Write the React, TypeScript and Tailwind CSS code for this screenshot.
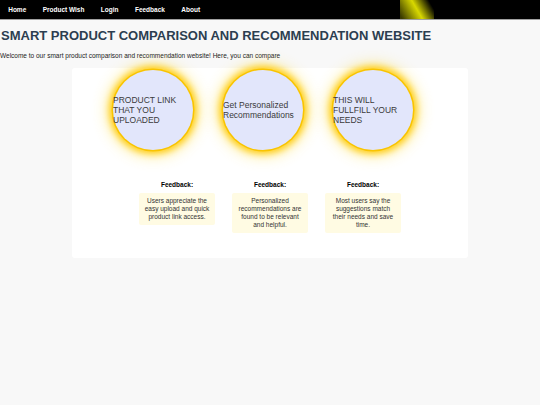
import React from 'react';

const navItems = ['Home', 'Product Wish', 'Login', 'Feedback', 'About'];

const circles = [
  'PRODUCT LINK THAT YOU UPLOADED',
  'Get Personalized Recommendations',
  'THIS WILL FULLFILL YOUR NEEDS',
];

const feedback = [
  'Users appreciate the easy upload and quick product link access.',
  'Personalized recommendations are found to be relevant and helpful.',
  'Most users say the suggestions match their needs and save time.',
];

export default function App() {
  return (
    <div className="min-h-screen bg-[#f8f8f8] font-['Liberation_Sans',Arial,sans-serif]">
      {/* Nav */}
      <nav className="flex h-[20px] items-center bg-black border-b border-[#a0a0a0]">
        {navItems.map((item) => (
          <a key={item} className="px-[8.2px] text-[6.5px] font-bold text-white">
            {item}
          </a>
        ))}
        <div className="ml-auto mr-[106px] h-full w-[34px] bg-[linear-gradient(60deg,#3a3a00_5%,#d8d800_50%,#000_88%)]" />
      </nav>

      <h1 className="mt-2 text-[13px] leading-[15px] font-bold text-[#2c3e50] pl-[1px]">
        SMART PRODUCT COMPARISON AND RECOMMENDATION WEBSITE
      </h1>
      <p className="mt-[9px] text-[6.5px] leading-[8px] text-[#222]">
        Welcome to our smart product comparison and recommendation website! Here, you can compare
      </p>

      {/* Panel */}
      <section className="mx-[72px] mt-2 rounded-[3px] bg-white pb-[25px]">
        <div className="flex gap-[30px] pl-[41px] pt-[2px]">
          {circles.map((c) => (
            <div
              key={c}
              className="flex h-20 w-20 items-center rounded-full bg-[#e2e6fb] shadow-[0_0_0_1.5px_#f9c400,0_0_6px_4px_rgba(255,200,0,0.85),0_0_14px_7px_rgba(255,225,60,0.45)]"
            >
              <span className="text-[8.5px] leading-[10px] text-[#3a3a3a]">{c}</span>
            </div>
          ))}
        </div>

        <div className="mt-[31px] flex items-start justify-center gap-[17px]">
          {feedback.map((f, i) => (
            <div key={i} className="flex w-[76px] flex-col items-center">
              <h4 className="mb-[4px] text-[6.5px] leading-[8px] font-bold text-black">Feedback:</h4>
              <p className="w-full rounded-[2px] bg-[#fffbe3] px-[4px] py-[4px] text-center text-[6.5px] leading-[8px] text-[#333]">
                {f}
              </p>
            </div>
          ))}
        </div>
      </section>
    </div>
  );
}
